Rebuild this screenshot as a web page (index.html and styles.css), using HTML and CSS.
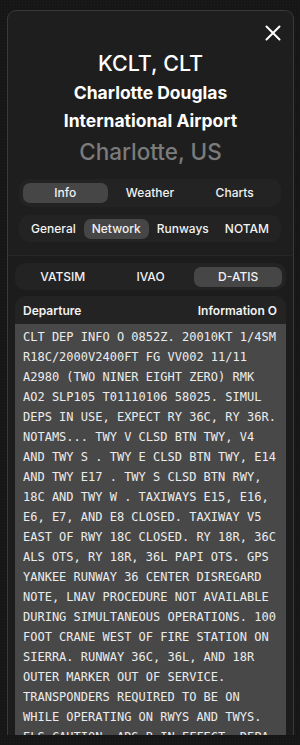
FILE: index.html
```html
<!DOCTYPE html>
<html>
<head>
<meta charset="utf-8">
<link rel="stylesheet" href="styles.css">
</head>
<body>
<div class="map">
  <div class="panel">
    <div class="header">
      <button class="close" aria-label="Close">
        <svg width="16" height="16" viewBox="0 0 16 16"><path d="M1.5 1.5 L14.5 14.5 M14.5 1.5 L1.5 14.5" stroke="#fff" stroke-width="2" stroke-linecap="round"/></svg>
      </button>
      <div class="code">KCLT, CLT</div>
      <div class="name">Charlotte Douglas<br>International Airport</div>
      <div class="city">Charlotte, US</div>
    </div>
    <div class="seg seg-main">
      <div class="tab active">Info</div>
      <div class="tab">Weather</div>
      <div class="tab">Charts</div>
    </div>
    <div class="seg seg-sub">
      <div class="tab">General</div>
      <div class="tab active">Network</div>
      <div class="tab">Runways</div>
      <div class="tab">NOTAM</div>
    </div>
    <div class="lower">
      <div class="seg seg-net">
        <div class="tab">VATSIM</div>
        <div class="tab">IVAO</div>
        <div class="tab active">D-ATIS</div>
      </div>
      <div class="card">
        <div class="card-head">
          <span class="dep">Departure</span>
          <span class="info">Information O</span>
        </div>
        <div class="atis">CLT DEP INFO O 0852Z. 20010KT 1/4SM
R18C/2000V2400FT FG VV002 11/11
A2980 (TWO NINER EIGHT ZERO) RMK
AO2 SLP105 T01110106 58025. SIMUL
DEPS IN USE, EXPECT RY 36C, RY 36R.
NOTAMS... TWY V CLSD BTN TWY, V4
AND TWY S . TWY E CLSD BTN TWY, E14
AND TWY E17 . TWY S CLSD BTN RWY,
18C AND TWY W . TAXIWAYS E15, E16,
E6, E7, AND E8 CLOSED. TAXIWAY V5
EAST OF RWY 18C CLOSED. RY 18R, 36C
ALS OTS, RY 18R, 36L PAPI OTS. GPS
YANKEE RUNWAY 36 CENTER DISREGARD
NOTE, LNAV PROCEDURE NOT AVAILABLE
DURING SIMULTANEOUS OPERATIONS. 100
FOOT CRANE WEST OF FIRE STATION ON
SIERRA. RUNWAY 36C, 36L, AND 18R
OUTER MARKER OUT OF SERVICE.
TRANSPONDERS REQUIRED TO BE ON
WHILE OPERATING ON RWYS AND TWYS.
ELS CAUTION, ADS-B IN EFFECT. DEPA</div>
      </div>
    </div>
  </div>
</div>
</body>
</html>
```
FILE: styles.css
```css
* { box-sizing: border-box; }
html, body {
  margin: 0;
  padding: 0;
  width: 300px;
  height: 745px;
  overflow: hidden;
}
body {
  font-family: Inter, "Noto Sans", sans-serif;
  color: #fff;
  background: #171717;
}
.map {
  width: 300px;
  height: 745px;
  padding: 10px 6px 0 7px;
  background-color: #161616;
  background-image: radial-gradient(#1f1f1f 0.6px, transparent 0.8px);
  background-size: 3px 3px;
}
.panel {
  height: 725px;
  overflow: hidden;
  background: #1e1e1e;
  border: 1px solid #3a3a3a;
  border-bottom: none;
  border-radius: 9px 9px 0 0;
}
.header {
  position: relative;
  padding-top: 38px;
  text-align: center;
}
.close {
  position: absolute;
  top: 14px;
  right: 12px;
  width: 16px;
  height: 16px;
  padding: 0;
  border: none;
  background: none;
  display: flex;
}
.code {
  font-size: 21.5px;
  font-weight: 500;
  line-height: 28px;
}
.name {
  margin-top: 2px;
  font-size: 17.5px;
  font-weight: 700;
  line-height: 28px;
}
.city {
  margin-top: 3px;
  font-size: 22.5px;
  font-weight: 500;
  line-height: 28px;
  color: #7b7b7b;
}
.seg {
  display: flex;
  background: #232323;
  border-radius: 10px;
  padding: 4px;
}
.tab {
  height: 20px;
  line-height: 20px;
  font-size: 12px;
  font-weight: 500;
  color: #f2f2f2;
  text-align: center;
  border-radius: 7px;
}
.tab.active { background: #464646; }
.seg-main {
  margin: 13px 12px 0 11px;
}
.seg-main .tab, .seg-net .tab { flex: 1; }
.seg-sub {
  margin: 8px 12px 0 11px;
  height: 27px;
  padding: 4px 4px 3px;
  justify-content: space-between;
}
.seg-sub .tab { padding: 0 8px; }
.lower {
  margin-top: 13px;
  border-top: 1px solid #262626;
  background: #1c1c1c;
  padding: 7px 7px 0 7px;
  height: 100%;
}
.seg-net {
  height: 27px;
  padding: 4px 4px 3px;
}
.card {
  margin-top: 6px;
  background: #232323;
  border-radius: 10px 10px 0 0;
  overflow: hidden;
}
.card-head {
  display: flex;
  justify-content: space-between;
  align-items: center;
  height: 28px;
  padding: 0 9px 0 8px;
  font-size: 12px;
  font-weight: 600;
  color: #f2f2f2;
}
.atis {
  background: #484848;
  padding: 3px 8px 0 8px;
  font-family: "DejaVu Sans Mono", "Liberation Mono", monospace;
  font-size: 12px;
  line-height: 20px;
  color: #ececec;
  white-space: pre;
  overflow: hidden;
}
```
